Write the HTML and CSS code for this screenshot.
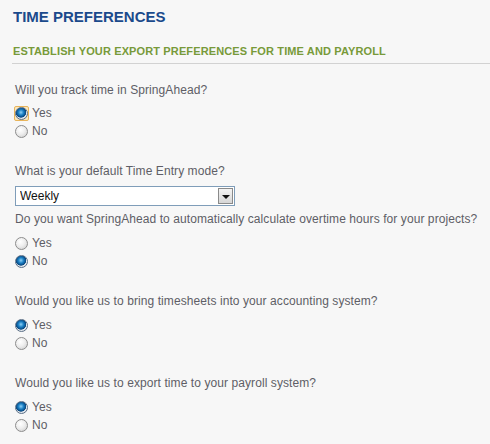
FILE: index.html
```html
<!DOCTYPE html>
<html lang="en">
<head>
    <meta charset="UTF-8">
    <meta name="viewport" content="width=device-width, initial-scale=1.0">
    <title>Time Preferences</title>
    <link rel="stylesheet" href="styles.css">
</head>
<body>
    <div class="page">
        <h2 class="title">TIME PREFERENCES</h2>
        <h3 class="subtitle">ESTABLISH YOUR EXPORT PREFERENCES FOR TIME AND PAYROLL</h3>

        <div class="form">
            <!-- Track time -->
            <div class="question first">
                <p class="label">Will you track time in SpringAhead?</p>
                <label class="option"><span class="focus"><input type="radio" name="track" checked></span>Yes</label>
                <label class="option"><input type="radio" name="track">No</label>
            </div>

            <!-- Entry mode + overtime -->
            <div class="question">
                <p class="label">What is your default Time Entry mode?</p>
                <div class="select-wrap">
                    <select class="select">
                        <option>Weekly</option>
                        <option>Daily</option>
                    </select>
                    <span class="select-btn"></span>
                </div>
                <p class="label">Do you want SpringAhead to automatically calculate overtime hours for your projects?</p>
                <label class="option"><input type="radio" name="overtime">Yes</label>
                <label class="option"><input type="radio" name="overtime" checked>No</label>
            </div>

            <!-- Timesheets -->
            <div class="question">
                <p class="label">Would you like us to bring timesheets into your accounting system?</p>
                <label class="option"><input type="radio" name="sheets" checked>Yes</label>
                <label class="option"><input type="radio" name="sheets">No</label>
            </div>

            <!-- Payroll -->
            <div class="question">
                <p class="label">Would you like us to export time to your payroll system?</p>
                <label class="option"><input type="radio" name="payroll" checked>Yes</label>
                <label class="option"><input type="radio" name="payroll">No</label>
            </div>
        </div>
    </div>
</body>
</html>
```

FILE: styles.css
```css
body {
    margin: 0;
    background-color: #f7f7f7;
    font-family: "Liberation Sans", Arial, sans-serif;
    font-size: 12px;
    color: #5e5e66;
    letter-spacing: 0.08px;
}
.page {
    padding: 8px 0 0 13px;
}
.title {
    margin: 0;
    font-size: 15px;
    line-height: 18px;
    color: #1b4a8c;
    letter-spacing: 0;
}
.subtitle {
    margin: 17px 0 0 -1px;
    padding: 0 0 4px 1px;
    font-size: 11px;
    line-height: 16px;
    color: #789a3a;
    letter-spacing: 0.13px;
    border-bottom: 1px solid #d2d2d2;
}
.form {
    padding: 17px 0 0 2px;
}
.question {
    margin-bottom: 22px;
}
.label {
    margin: 0 0 6px;
    line-height: 18px;
}
.first .label {
    margin-bottom: 5px;
}
.option {
    display: flex;
    align-items: center;
    height: 18px;
}
.option input {
    appearance: none;
    -webkit-appearance: none;
    width: 13px;
    height: 13px;
    margin: 0 4px 0 0;
    border: 1px solid #8d8d8d;
    border-radius: 50%;
    background: radial-gradient(circle at 40% 35%, #ffffff 0%, #eeeeee 45%, #c9c9c9 100%);
    box-sizing: border-box;
}
.option input:checked {
    border-color: #5b6f86;
    background: radial-gradient(circle at 45% 40%, #8fd0f5 0%, #1a7fc4 30%, #08467e 55%, #e9eef3 62%, #c3c8cf 100%);
}
.focus {
    display: flex;
    align-items: center;
    justify-content: center;
    width: 15px;
    height: 15px;
    margin: 0 3px 0 -1px;
    border: 1px solid #e8b45a;
    border-radius: 2px;
    background: #fbe7bd;
    box-sizing: border-box;
}
.focus input {
    margin: 0;
}
.select-wrap {
    position: relative;
    width: 220px;
    margin-bottom: 4px;
}
.select {
    appearance: none;
    -webkit-appearance: none;
    display: block;
    width: 100%;
    height: 20px;
    padding: 0 0 0 4px;
    border: 1px solid #7f9db9;
    border-radius: 0;
    background: #fff;
    font-family: "Liberation Sans", Arial, sans-serif;
    font-size: 12px;
    color: #111;
}
.select-btn {
    position: absolute;
    top: 2px;
    right: 2px;
    width: 15px;
    height: 16px;
    border: 1px solid #8a8a8a;
    background: linear-gradient(#f4f4f4, #d6d6d6);
    box-sizing: border-box;
}
.select-btn::after {
    content: "";
    position: absolute;
    left: 3px;
    top: 6px;
    border-left: 4px solid transparent;
    border-right: 4px solid transparent;
    border-top: 4px solid #111;
}
```
